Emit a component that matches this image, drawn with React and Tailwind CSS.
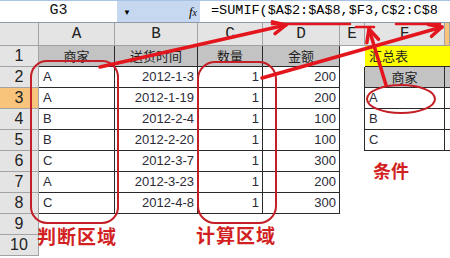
import React from "react";

const SANS = "font-['Liberation_Sans','Noto_Sans_CJK_SC',sans-serif]";
const MONO = "font-['Liberation_Mono',monospace]";
const CJK = "font-['Noto_Sans_CJK_SC',sans-serif]";

const HDR = "bg-[#e4e4e4] border-r border-b border-[#a3a3a3] justify-center text-[#222]";
const HDR_SEL = "bg-[#f8c47c] border-r border-b border-[#a3a3a3] justify-center text-[#222]";
const T = "bg-white border-r border-b border-[#2a2a2a] text-[#2b2b38]";
const TH = "bg-[#c3c3c3] border-r border-b border-[#2a2a2a] justify-center text-[#222]";
const BLANK = "bg-white";

function C({ c = BLANK, children, align = "", font = SANS, size = "text-[13px]" }) {
  return (
    <div className={`flex items-center overflow-hidden whitespace-nowrap ${font} ${size} ${c} ${align}`}>
      {children}
    </div>
  );
}

const data = [
  ["A", "2012-1-3", "1", "200"],
  ["A", "2012-1-19", "1", "200"],
  ["B", "2012-2-4", "1", "100"],
  ["B", "2012-2-20", "1", "100"],
  ["C", "2012-3-7", "1", "300"],
  ["A", "2012-3-23", "1", "200"],
  ["C", "2012-4-8", "1", "300"],
];

function arrowHead(x1, y1, x2, y2, len = 14, ang = 0.45) {
  const a = Math.atan2(y2 - y1, x2 - x1);
  const p1x = x2 - len * Math.cos(a - ang);
  const p1y = y2 - len * Math.sin(a - ang);
  const p2x = x2 - len * Math.cos(a + ang);
  const p2y = y2 - len * Math.sin(a + ang);
  return `M${p1x},${p1y} L${x2},${y2} L${p2x},${p2y}`;
}

export default function App() {
  const rows = [];
  const colHdr = ["", "A", "B", "C", "D", "E", "F", ""];
  colHdr.forEach((l, i) =>
    rows.push(
      <C key={`h${i}`} c={i === 7 ? HDR_SEL : HDR} font={MONO} size="text-[16px]">
        {l}
      </C>
    )
  );
  rows.push(<C key="r1h" c={HDR} size="text-[16px]">1</C>);
  ["商家", "送货时间", "数量", "金额"].forEach((t, i) =>
    rows.push(<C key={`r1c${i}`} c={TH} font={CJK}>{t}</C>)
  );
  rows.push(<C key="r1e" />);
  rows.push(
    <C key="r1f" c="bg-[#ffff00] border-b border-[#2a2a2a] pl-[4px] text-[#222]" font={CJK}>
      汇总表
    </C>
  );
  rows.push(<C key="r1g" c="bg-[#ffff00] border-b border-[#2a2a2a]" />);
  data.forEach((d, idx) => {
    const r = idx + 2;
    rows.push(
      <C key={`r${r}h`} c={r === 3 ? HDR_SEL : HDR} size="text-[16px]">
        {r}
      </C>
    );
    rows.push(<C key={`r${r}a`} c={`${T} pl-[4px]`}>{d[0]}</C>);
    rows.push(<C key={`r${r}b`} c={`${T} justify-end pr-[3px]`}>{d[1]}</C>);
    rows.push(<C key={`r${r}c`} c={`${T} justify-end pr-[3px]`}>{d[2]}</C>);
    rows.push(<C key={`r${r}d`} c={`${T} justify-end pr-[3px]`}>{d[3]}</C>);
    if (r >= 2 && r <= 5) {
      rows.push(<C key={`r${r}e`} c="bg-white border-r border-[#2a2a2a]" />);
    } else {
      rows.push(<C key={`r${r}e`} />);
    }
    if (r === 2) {
      rows.push(<C key={`r${r}f`} c={TH} font={CJK}>商家</C>);
      rows.push(<C key={`r${r}g`} c="bg-[#c3c3c3] border-b border-[#2a2a2a]" />);
    } else if (r <= 5) {
      rows.push(<C key={`r${r}f`} c={`${T} pl-[4px]`}>{["A", "B", "C"][r - 3]}</C>);
      rows.push(<C key={`r${r}g`} c="bg-white border-b border-[#2a2a2a]" />);
    } else {
      rows.push(<C key={`r${r}f`} />);
      rows.push(<C key={`r${r}g`} />);
    }
  });
  [9, 10].forEach((r) => {
    rows.push(<C key={`r${r}h`} c={HDR} size="text-[16px]">{r}</C>);
    for (let i = 0; i < 7; i++) rows.push(<C key={`r${r}x${i}`} />);
  });

  const red = "#e3161d";
  const dark = "#c41f26";

  return (
    <div className="relative w-[450px] h-[258px] overflow-hidden bg-white">
      <div className="flex h-[23px] border-t border-[#a9c3e6] border-b border-b-[#8e9aab] bg-white">
        <div className={`w-[117px] flex items-center justify-center ${MONO} text-[15px] text-[#111] bg-white`}>
          G3
        </div>
        <div className="w-[83px] bg-[#c6d8f0] flex items-center justify-between pl-[6px] pr-[3px]">
          <span className="text-[8px] text-black leading-none">▼</span>
          <span className="font-['Liberation_Serif',serif] italic text-[13px] text-black leading-none">
            f<span className="text-[10px]">x</span>
          </span>
        </div>
        <div className={`flex-1 flex items-center pl-[11px] whitespace-nowrap overflow-hidden ${MONO} text-[13.5px] text-black`}>
          =SUMIF($A$2:$A$8,$F3,C$2:C$8
        </div>
      </div>
      <div className="grid grid-cols-[39px_76px_83px_65px_77px_25px_80px_1fr] grid-rows-[23px_repeat(10,21px)]">
        {rows}
      </div>

      <svg className="absolute inset-0 pointer-events-none" width="450" height="258" viewBox="0 0 450 258">
        <rect x="31" y="61" width="87" height="162" rx="16" fill="none" stroke={dark} strokeWidth="2" />
        <rect x="198" y="62" width="78" height="161" rx="17" fill="none" stroke={dark} strokeWidth="2" />
        <ellipse cx="401" cy="99" rx="34" ry="14" fill="none" stroke={dark} strokeWidth="2" />
        <g stroke={red} strokeWidth="3.5" fill="none" strokeLinecap="round" strokeLinejoin="round">
          <line x1="100" y1="67" x2="286" y2="25" />
          <path d={arrowHead(100, 67, 286, 25)} />
          <line x1="262" y1="78" x2="442" y2="27" />
          <path d={arrowHead(262, 78, 442, 27)} />
          <line x1="386" y1="85" x2="369" y2="29" />
          <path d={arrowHead(386, 85, 369, 29)} />
          <line x1="272" y1="24" x2="350" y2="24" strokeWidth="2.5" />
          <line x1="356" y1="27" x2="374" y2="27" strokeWidth="2.5" />
          <line x1="396" y1="24" x2="440" y2="24" strokeWidth="2.5" />
        </g>
      </svg>
      <div className={`absolute left-[37px] top-[226px] ${CJK} font-bold text-[19px] leading-none text-[#d21f22] tracking-[1px]`}>
        判断区域
      </div>
      <div className={`absolute left-[196px] top-[225px] ${CJK} font-bold text-[19px] leading-none text-[#d21f22] tracking-[1px]`}>
        计算区域
      </div>
      <div className={`absolute left-[373px] top-[161px] ${CJK} font-bold text-[18px] leading-none text-[#d21f22]`}>
        条件
      </div>
    </div>
  );
}
